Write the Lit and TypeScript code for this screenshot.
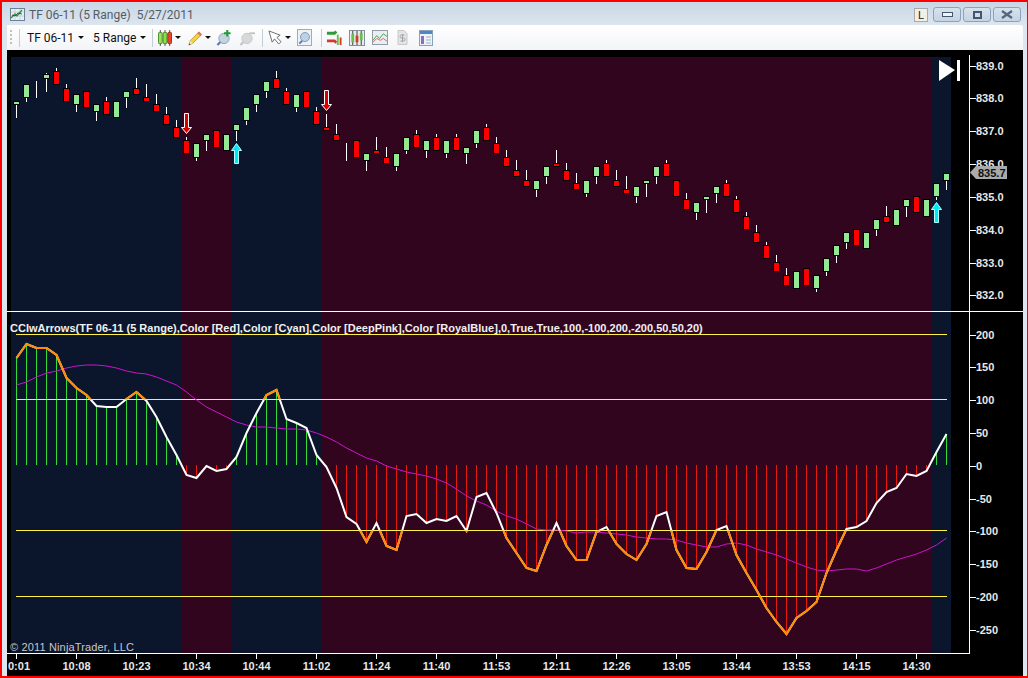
import { LitElement, html, svg, css } from "lit";
import { customElement } from "lit/decorators.js";

const barX = (i: number) => 16.5 + 10 * i;

// g = up bar, r = down bar: [kind, bodyTop, bodyBottom, wickTop, wickBottom]
type Candle = [string, number, number, number?, number?];
const candles: Candle[] = [
  ["g", 102, 104, 102, 118], ["g", 85, 97, 85, 102], ["d", 89, 90, 81, 98], ["g", 75, 78, 73, 92],
  ["r", 72, 84, 68, 84], ["r", 89, 101, 84, 101], ["g", 95, 104, 95, 112], ["r", 92, 107],
  ["g", 105, 111, 105, 121], ["r", 102, 114, 97, 114], ["g", 102, 117], ["g", 92, 97, 92, 108],
  ["r", 89, 94, 78, 94], ["r", 98, 101, 84, 101], ["r", 105, 111, 94, 111], ["r", 115, 124, 107, 124],
  ["r", 128, 137, 120, 137], ["r", 141, 153, 137, 153], ["g", 144, 157, 144, 161], ["g", 135, 140, 135, 151],
  ["r", 131, 147], ["g", 135, 150], ["g", 125, 130, 125, 141], ["g", 108, 120, 108, 125],
  ["g", 95, 104, 95, 112], ["g", 82, 91, 82, 98], ["r", 79, 88, 71, 88], ["r", 92, 104, 88, 104],
  ["g", 95, 107, 95, 112], ["r", 92, 107], ["r", 112, 124, 107, 124], ["r", 128, 130, 114, 130],
  ["r", 135, 140, 124, 140], ["d", 150, 151, 143, 161], ["r", 141, 157], ["g", 154, 160, 154, 171],
  ["r", 151, 153, 137, 153], ["r", 158, 163, 147, 163], ["g", 154, 166, 154, 171], ["g", 138, 150, 138, 154],
  ["r", 135, 147, 130, 147], ["g", 141, 150, 141, 158], ["r", 138, 150, 134, 150], ["g", 141, 153, 141, 158],
  ["r", 138, 150, 134, 150], ["g", 148, 153, 148, 164], ["g", 131, 143, 131, 148], ["r", 128, 140, 124, 140],
  ["r", 144, 153, 137, 153], ["r", 158, 166, 150, 166], ["r", 171, 176, 160, 176], ["r", 181, 186, 170, 186],
  ["g", 181, 189, 181, 197], ["g", 167, 176, 167, 184], ["r", 164, 166, 150, 166], ["r", 171, 180, 163, 180],
  ["r", 184, 189, 173, 189], ["g", 181, 193, 181, 197], ["g", 167, 176, 167, 184], ["r", 164, 176, 160, 176],
  ["r", 181, 186, 170, 186], ["r", 190, 193, 176, 193], ["g", 187, 196, 187, 203], ["g", 181, 183, 181, 197],
  ["g", 167, 176, 167, 184], ["r", 164, 176, 160, 176], ["r", 181, 196], ["r", 200, 209, 193, 209],
  ["g", 203, 212, 203, 220], ["g", 197, 199, 197, 213], ["g", 187, 193, 187, 203], ["r", 184, 196, 180, 196],
  ["r", 200, 212, 196, 212], ["r", 217, 229, 212, 229], ["r", 233, 242, 225, 242], ["r", 246, 258, 242, 258],
  ["r", 263, 271, 255, 271], ["r", 276, 285, 268, 285], ["g", 272, 288], ["r", 269, 285],
  ["g", 276, 288, 276, 292], ["g", 259, 271, 259, 276], ["g", 246, 255, 246, 263], ["g", 233, 242, 233, 249],
  ["r", 230, 245], ["g", 233, 248], ["g", 220, 229, 220, 236], ["r", 217, 222, 206, 222],
  ["g", 210, 225], ["g", 200, 206, 200, 217], ["r", 197, 212], ["g", 200, 216],
  ["g", 184, 196, 184, 200], ["g", 174, 180, 174, 190],
];

const cci = [
  358, 344, 348, 348, 355, 378, 388, 395, 406, 407, 407, 399, 392, 401, 417, 437, 455, 475, 478, 466,
  471, 469, 457, 433, 413, 395, 390, 419, 423, 428, 455, 467, 488, 517, 524, 542, 523, 546, 550, 516,
  514, 523, 519, 521, 516, 531, 497, 493, 513, 538, 553, 568, 571, 545, 523, 546, 560, 560, 532, 527,
  544, 554, 560, 544, 516, 512, 550, 568, 569, 552, 530, 526, 555, 573, 590, 608, 622, 634, 618, 611,
  602, 573, 550, 529, 527, 521, 503, 492, 488, 474, 476, 471, 452, 434,
];

const signal = [
  385, 382, 377, 373, 371, 368, 366, 365, 365, 366, 368, 371, 373, 374, 377, 381, 385, 392, 400, 407,
  412, 417, 422, 425, 427, 427, 428, 429, 429, 430, 433, 437, 442, 448, 453, 458, 461, 466, 469, 472,
  474, 476, 479, 483, 489, 496, 501, 505, 511, 516, 519, 524, 529, 530, 530, 531, 533, 532, 532, 533,
  534, 535, 537, 538, 539, 539, 540, 543, 545, 547, 547, 544, 543, 545, 549, 552, 555, 559, 563, 567,
  570, 571, 570, 569, 569, 571, 568, 564, 560, 557, 554, 550, 545, 538,
];

const toPoints = (ys: number[]) => ys.map((y, i) => `${barX(i)},${y}`).join(" ");

const zones = [
  { x: 11, w: 170, up: true },
  { x: 181, w: 50, up: false },
  { x: 231, w: 90, up: true },
  { x: 321, w: 611, up: false },
  { x: 932, w: 19, up: true },
];

const levels = [334.5, 399.5, 530.5, 596.5];

const priceAxis: [string, number][] = [
  ["839.0", 66], ["838.0", 98], ["837.0", 131], ["836.0", 164],
  ["835.0", 197], ["834.0", 230], ["833.0", 263], ["832.0", 295],
];
const oscAxis: [string, number][] = [
  ["200", 335], ["150", 367], ["100", 400], ["50", 433], ["0", 466],
  ["-50", 499], ["-100", 531], ["-150", 564], ["-200", 597], ["-250", 630],
];
const times = [
  "0:01", "10:08", "10:23", "10:34", "10:44", "11:02", "11:24", "11:40",
  "11:53", "12:11", "12:26", "13:05", "13:44", "13:53", "14:15", "14:30",
];

const LABEL =
  "CCIwArrows(TF 06-11 (5 Range),Color [Red],Color [Cyan],Color [DeepPink],Color [RoyalBlue],0,True,True,100,-100,200,-200,50,50,20)";

const downArrow = (x: number, y: number) => svg`<polygon class="arrow-down"
  points="${x - 2},${y} ${x + 2},${y} ${x + 2},${y + 14} ${x + 5},${y + 14} ${x},${y + 20} ${x - 5},${y + 14} ${x - 2},${y + 14}" />`;

const upArrow = (x: number, y: number) => svg`<polygon class="arrow-up"
  points="${x},${y} ${x + 5},${y + 7} ${x + 2},${y + 7} ${x + 2},${y + 20} ${x - 2},${y + 20} ${x - 2},${y + 7} ${x - 5},${y + 7}" />`;

const caret = html`<svg width="6" height="3" viewBox="0 0 6 3"><path d="M0 0h6L3 3z" fill="#111" /></svg>`;

const chartIcon = html`<svg width="15" height="15" viewBox="0 0 15 15">
  <rect x="0.5" y="1.5" width="14" height="12" fill="#e6eef6" stroke="#6f7f95" />
  <path d="M1 5h13M1 9h13M5 2v11M10 2v11" stroke="#b7c4d6" stroke-width="0.6" />
  <path d="M1 11l4-4 2 2 5-6" fill="none" stroke="#2f9a3a" stroke-width="1.4" />
  <path d="M2 8l3 1 3-3 4 1" fill="none" stroke="#333" stroke-width="0.8" />
</svg>`;

const candleIcon = html`<svg width="14" height="16" viewBox="0 0 15 17">
  <path d="M2.5 0v17M7.5 0v17M12.5 0v17" stroke="#444" />
  <rect x="0.5" y="2.5" width="4" height="12" rx="1" fill="#9fe35a" stroke="#3f8a22" />
  <rect x="5.5" y="2.5" width="4" height="12" rx="1" fill="#8fdc4f" stroke="#3f8a22" />
  <rect x="10.5" y="2.5" width="4" height="12" rx="1" fill="#e8452c" stroke="#9a2a14" />
</svg>`;

const pencilIcon = html`<svg width="15" height="16" viewBox="0 0 17 18">
  <path d="M1 17l1.5-5L12 2.5 15 5.5 5.5 15z" fill="#f3d33f" stroke="#a98a1c" stroke-width="0.8" />
  <path d="M11 3.5l3 3 1.5-1.5-3-3z" fill="#e57f6b" stroke="#a5584a" stroke-width="0.6" />
  <path d="M1 17l1.5-5 3 3z" fill="#f4e2bd" />
  <path d="M1 17l.6-2 1.4 1.4z" fill="#333" />
</svg>`;

const lensIn = html`<svg width="16" height="17" viewBox="0 0 17 18">
  <path d="M1.5 17l4-4" stroke="#4d7fb8" stroke-width="2.4" />
  <circle cx="8.5" cy="10" r="5.5" fill="#c4d3df" stroke="#8aa0b5" />
  <path d="M12 1v7M8.5 4.5h7" stroke="#1f9a3c" stroke-width="2.2" />
</svg>`;

const lensOut = html`<svg width="16" height="17" viewBox="0 0 17 18">
  <path d="M1.5 17l4-4" stroke="#c4c4c4" stroke-width="2.4" />
  <circle cx="8.5" cy="10" r="5.5" fill="#d8d8d8" stroke="#c6c6c6" />
  <path d="M11 4.5h6" stroke="#c2c2c2" stroke-width="2" />
</svg>`;

const pointerIcon = html`<svg width="14" height="15" viewBox="0 0 15 16">
  <path d="M1 1l3.5 12 2.5-3.5L11.5 15 14 12.5 9.5 8 13 5.5z" fill="#fff" stroke="#666" stroke-width="1" />
</svg>`;

const findIcon = html`<svg width="15" height="17" viewBox="0 0 16 18">
  <rect x="0.5" y="0.5" width="15" height="17" fill="#eef2f6" stroke="#9aa6b4" />
  <path d="M2.5 15.5l3-3" stroke="#4d7fb8" stroke-width="2" />
  <circle cx="8.5" cy="8.5" r="4.8" fill="#bcd2e6" stroke="#7f97ad" />
</svg>`;

const strategyIcon = html`<svg width="16" height="17" viewBox="0 0 17 18">
  <path d="M1 4.5h8l2-2" fill="none" stroke="#2f9a3a" stroke-width="3" />
  <path d="M1 12.5h8l2 2" fill="none" stroke="#d8382a" stroke-width="3" />
  <rect x="11.5" y="6" width="2" height="11" fill="#63c24a" />
  <rect x="14.5" y="9" width="2" height="8" fill="#d8382a" />
</svg>`;

const gridCandleIcon = html`<svg width="16" height="16" viewBox="0 0 17 17">
  <rect x="0.5" y="0.5" width="16" height="16" fill="#e9edf1" stroke="#7e8a98" />
  <path d="M4 1v15M8.5 1v15M13 1v15" stroke="#333" />
  <rect x="2.5" y="4" width="3" height="9" fill="#63c24a" />
  <rect x="7" y="6" width="3" height="7" fill="#d8382a" />
  <rect x="11.5" y="3" width="3" height="8" fill="#63c24a" />
</svg>`;

const lineChartIcon = html`<svg width="16" height="15" viewBox="0 0 17 16">
  <rect x="0.5" y="0.5" width="16" height="15" fill="#e9eef2" stroke="#8a96a4" />
  <path d="M1 11l4-5 3 3 4-5 4 3" fill="none" stroke="#3aa64a" />
  <path d="M1 13l4-4 4 2 3-2 4 3" fill="none" stroke="#d8685a" />
</svg>`;

const dollarIcon = html`<svg width="11" height="15" viewBox="0 0 10 15">
  <path d="M0.5 0.5h6l3 3v11h-9z" fill="#e4e4e4" stroke="#c8c8c8" />
  <path d="M7 5H4a1.3 1.3 0 000 3h2a1.3 1.3 0 010 3H3M5 4v8" fill="none" stroke="#a4a4a4" />
</svg>`;

const formIcon = html`<svg width="14" height="16" viewBox="0 0 14 16">
  <rect x="0.5" y="0.5" width="13" height="15" fill="#eef3f8" stroke="#8aa0b8" />
  <rect x="1" y="1" width="12" height="3" fill="#4f86c4" />
  <rect x="2" y="6" width="3" height="8" fill="#8d6cc8" />
  <path d="M7 7h5M7 10h5M7 13h5" stroke="#9fb2c6" />
</svg>`;

@customElement("app-root")
export class AppRoot extends LitElement {
  static styles = css`
    :host {
      display: block;
      width: 1028px;
      height: 678px;
    }
    .window {
      box-sizing: border-box;
      width: 1028px;
      height: 678px;
      border: 2px solid #f00;
      border-width: 2px 1px 2px 2px;
      background: linear-gradient(#c8d7e6, #dde6ef 24px);
      display: flex;
      flex-direction: column;
      padding: 0 4px 0 5px;
      font-family: Roboto, sans-serif;
    }
    .title {
      box-sizing: border-box;
      height: 23px;
      padding-top: 2px;
      display: flex;
      align-items: center;
      margin-left: 3px;
      font-size: 12px;
      color: #555c66;
      white-space: pre;
    }
    .title > svg {
      margin-right: 4px;
    }
    .controls {
      margin-left: auto;
      margin-right: 2px;
      display: flex;
      align-items: center;
      gap: 2px;
    }
    .lock {
      width: 12px;
      height: 12px;
      border: 1px solid #a9a9a9;
      margin-right: 3px;
      background: #f4efe4;
      color: #222;
      font: 11px/12px "Liberation Sans", sans-serif;
      text-align: center;
    }
    .ctl {
      box-sizing: border-box;
      width: 28px;
      height: 15px;
      border: 1px solid #8aa2bc;
      border-radius: 3px;
      background: linear-gradient(#d6e1ec, #c5d4e3);
      display: flex;
      align-items: center;
      justify-content: center;
    }
    .toolbar {
      height: 25px;
      display: flex;
      align-items: center;
      background: linear-gradient(#fff, #f2f4f7);
      border-radius: 0 3px 0 0;
      font-size: 12px;
      color: #111;
    }
    .toolbar > span {
      display: flex;
      align-items: center;
      flex: none;
    }
    .grip {
      width: 2px;
      height: 16px;
      margin-left: 3px;
      background: repeating-linear-gradient(#c9bfa9 0 2px, transparent 2px 4px);
    }
    .sep {
      width: 1px;
      height: 18px;
      background: #c4ccd6;
    }
    .m2 { margin-left: 2px; }
    .m3 { margin-left: 3px; }
    .m4 { margin-left: 4px; }
    .m5 { margin-left: 5px; }
    .m6 { margin-left: 6px; }
    .m7 { margin-left: 7px; }
    .m9 { margin-left: 9px; }
    .m11 { margin-left: 11px; }
    .chart {
      display: block;
      width: 1016px;
      height: 626px;
      background: #000;
    }
    .zone-up {
      fill: #0b152c;
    }
    .zone-down {
      fill: #32051f;
    }
    .wick {
      fill: #fff;
    }
    .body-g {
      fill: #93e893;
      stroke: #000;
    }
    .body-r {
      fill: #f00;
      stroke: #000;
    }
    .arrow-down {
      fill: #d80000;
      stroke: #fff;
    }
    .arrow-up {
      fill: #00e8f8;
      stroke: #b8ffff;
    }
    .axis-line {
      fill: #fff;
    }
    .axis {
      font: bold 11px "Liberation Sans", sans-serif;
      fill: #e8e8e8;
    }
    .label {
      font: bold 11px "Liberation Sans", sans-serif;
      letter-spacing: 0.016px;
      fill: #f0f0f0;
    }
    .copy {
      font: 11px "Liberation Sans", sans-serif;
      letter-spacing: 0.15px;
      fill: #c8c8c8;
    }
    .level {
      stroke: #fff04a;
      stroke-width: 1;
    }
    .hist-up {
      stroke: #33dd33;
    }
    .hist-down {
      stroke: #e8180c;
    }
    .signal {
      fill: none;
      stroke: #d010d0;
      stroke-width: 1;
    }
    .cci {
      fill: none;
      stroke: #fff;
      stroke-width: 2;
    }
    .cci-hot {
      fill: none;
      stroke: #ff8c00;
      stroke-width: 2;
    }
    .tag {
      fill: #aaa;
    }
    .tag-text {
      font: bold 11px "Liberation Sans", sans-serif;
      fill: #111;
    }
    .end-mark {
      fill: #fff;
    }
  `;

  private renderCandles() {
    return candles.map(([kind, top, bottom, wickTop, wickBottom], i) => {
      const x = barX(i) - 0.5;
      const wt = wickTop ?? top;
      const wb = wickBottom ?? bottom;
      if (kind === "d") {
        return svg`<rect class="wick" x=${x} y=${wt} width="1" height=${wb - wt} />`;
      }
      return svg`
        <rect class="wick" x=${x} y=${wt} width="1" height=${wb - wt} />
        <rect class=${kind === "g" ? "body-g" : "body-r"} x=${x - 2.5} y=${top - 0.5} width="6" height=${bottom - top + 1} />
      `;
    });
  }

  private renderChart() {
    return svg`
      ${zones.map(
        (z) => svg`<rect class=${z.up ? "zone-up" : "zone-down"} x=${z.x} y="57" width=${z.w} height="596" />`
      )}
      ${this.renderCandles()}
      ${downArrow(186.5, 113.5)} ${downArrow(326.5, 90.5)}
      ${upArrow(236.5, 143.5)} ${upArrow(936.5, 202.5)}
      <polygon class="end-mark" points="939,60 955,70 939,81" />
      <rect class="end-mark" x="957" y="60" width="3" height="21" />

      ${cci.map(
        (y, i) => svg`<line class=${y < 465 ? "hist-up" : "hist-down"} x1=${barX(i)} x2=${barX(i)} y1="465" y2=${y} />`
      )}
      ${levels.map((y) => svg`<line class="level" x1="16" x2="947" y1=${y} y2=${y} />`)}
      <polyline class="signal" points=${toPoints(signal)} />
      <clipPath id="hot">
        <rect x="0" y="300" width="1000" height="99.5" />
        <rect x="0" y="530.5" width="1000" height="120" />
      </clipPath>
      <polyline class="cci" points=${toPoints(cci)} />
      <polyline class="cci-hot" clip-path="url(#hot)" points=${toPoints(cci)} />
      <text class="label" x="10" y="332">${LABEL}</text>
      <text class="copy" x="10" y="651">© 2011 NinjaTrader, LLC</text>
    `;
  }

  private renderAxes() {
    return svg`
      <rect class="axis-line" x="7" y="311" width="1016" height="1" />
      <rect class="axis-line" x="969" y="55" width="1" height="599" />
      <rect class="axis-line" x="7" y="653" width="963" height="1" />
      ${[...priceAxis, ...oscAxis].map(
        ([label, y]) => svg`
          <rect class="axis-line" x="970" y=${y} width="6" height="1" />
          <text class="axis" x="976" y=${y + 4}>${label}</text>
        `
      )}
      ${times.map((t, i) => {
        const x = barX(i * 6);
        return svg`
          <rect class="axis-line" x=${x - 0.5} y="653" width="1" height="6" />
          ${i === 0
            ? svg`<text class="axis" x="8" y="670">${t}</text>`
            : svg`<text class="axis" x=${x} y="670" text-anchor="middle">${t}</text>`}
        `;
      })}
      <polygon class="tag" points="970,172.5 976,166 1007,166 1007,179 976,179" />
      <text class="tag-text" x="978" y="177">835.7</text>
    `;
  }

  render() {
    return html`
      <div class="window">
        <div class="title">
          ${chartIcon}<span>TF 06-11 (5 Range)  5/27/2011</span>
          <div class="controls">
            <div class="lock">L</div>
            <div class="ctl"><svg width="11" height="5"><rect x="0.5" y="0.5" width="10" height="4" fill="#eef3f8" stroke="#44566c" /></svg></div>
            <div class="ctl"><svg width="9" height="8"><rect x="1" y="1" width="7" height="6" fill="none" stroke="#44566c" stroke-width="2" /></svg></div>
            <div class="ctl"><svg width="12" height="9"><path d="M1 1l10 7M11 1L1 8" stroke="#54667c" stroke-width="2.2" /></svg></div>
          </div>
        </div>
        <div class="toolbar">
          <div class="grip"></div>
          <div class="sep m7"></div>
          <span class="m7">TF 06-11</span>
          <span class="m4">${caret}</span>
          <span class="m9">5 Range</span>
          <span class="m4">${caret}</span>
          <div class="sep m6"></div>
          <span class="m5">${candleIcon}</span>
          <span class="m3">${caret}</span>
          <span class="m7">${pencilIcon}</span>
          <span class="m2">${caret}</span>
          <span class="m5">${lensIn}</span>
          <span class="m7">${lensOut}</span>
          <div class="sep m7"></div>
          <span class="m5">${pointerIcon}</span>
          <span class="m3">${caret}</span>
          <span class="m6">${findIcon}</span>
          <div class="sep m9"></div>
          <span class="m4">${strategyIcon}</span>
          <span class="m7">${gridCandleIcon}</span>
          <span class="m7">${lineChartIcon}</span>
          <span class="m9">${dollarIcon}</span>
          <span class="m11">${formIcon}</span>
        </div>
        <svg class="chart" viewBox="7 50 1016 626">
          ${this.renderChart()} ${this.renderAxes()}
        </svg>
      </div>
    `;
  }
}
